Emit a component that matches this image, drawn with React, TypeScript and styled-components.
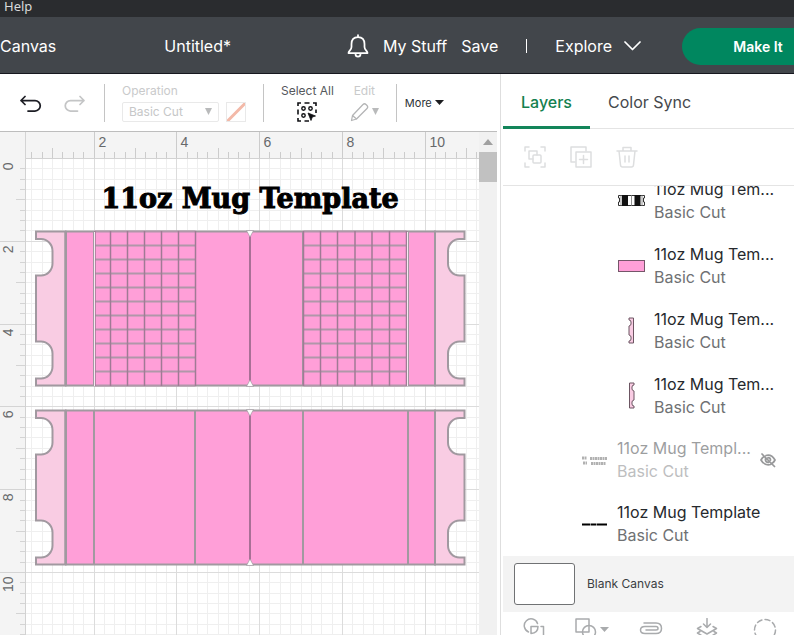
import React, { useEffect, useRef, useState } from "react";
import styled, { createGlobalStyle } from "styled-components";

const GlobalStyle = createGlobalStyle`
  *, *::before, *::after { box-sizing: border-box; }
  html, body { margin: 0; height: 100%; overflow: hidden; background: #fff; }
  #root { height: 100%; }
  button, select, input { font-family: inherit; margin: 0; padding: 0; border: 0; background: none; color: inherit; }
  svg { display: block; flex: none; }
`;

const Page = styled.div`
  display: flex;
  flex-direction: column;
  height: 100vh;
  overflow: hidden;
  font-family: Inter, "Liberation Sans", sans-serif;
  color: #2d3136;
`;

const MenuBar = styled.nav`
  flex: none;
  height: 17px;
  padding-left: 4px;
  background: #2a2c2f;
  color: #d9dadb;
  font-family: "Noto Sans", sans-serif;
`;

const MenuItem = styled.button`
  display: block;
  font-size: 13px;
  line-height: 12px;
`;

const Header = styled.header`
  flex: none;
  display: flex;
  align-items: center;
  height: 57px;
  padding-top: 2px;
  background: #42464b;
  border-bottom: 1px solid #16171f;
  color: #fff;
`;

const Title = styled.h1`
  flex: 1;
  margin: 0;
  padding-right: 8px;
  text-align: center;
  font-size: 16px;
  font-weight: 400;
`;

const HeaderNav = styled.div`
  display: flex;
  align-items: center;
  gap: 14px;
`;

const HeaderButton = styled.button`
  display: flex;
  align-items: center;
  gap: 12px;
  font-size: 16px;
  line-height: 20px;
`;

const Pipe = styled.span`
  width: 1px;
  height: 14px;
  margin: 0 14px;
  background: #fff;
`;

const MakeButton = styled.button`
  width: 112px;
  height: 37px;
  margin-left: 41px;
  padding-left: 40px;
  border-radius: 19px 0 0 19px;
  background: #00875f;
  color: #fff;
  font-size: 14px;
  font-weight: 600;
`;

const Main = styled.main`
  flex: 1;
  min-height: 0;
  display: flex;
`;

const Editor = styled.section`
  flex: 1;
  min-width: 0;
  display: flex;
  flex-direction: column;
  padding-right: 3px;
`;

const Toolbar = styled.div`
  flex: none;
  display: flex;
  align-items: center;
  height: 58px;
  padding-left: 20px;
  border-bottom: 1px solid #bdbdbd;
`;

const IconButton = styled.button`
  display: flex;
  align-items: center;
  gap: 3px;
`;

const History = styled.div`
  display: flex;
  gap: 21px;
  padding-top: 3px;
`;

const Divider = styled.span`
  width: 1px;
  height: 38px;
  margin: 0 17px;
  background: #c4c4c4;
`;

const Tool = styled.div<{ $muted?: boolean; $center?: boolean }>`
  display: flex;
  flex-direction: column;
  align-items: ${(p) => (p.$center ? "center" : "flex-start")};
  gap: 4px;
  font-size: 12px;
  line-height: 14px;
  color: ${(p) => (p.$muted ? "#c9cacb" : "#55585c")};
`;

const SelectionTools = styled.div`
  display: flex;
  gap: 16px;
`;

const OperationRow = styled.div`
  display: flex;
  gap: 7px;
`;

const SelectBox = styled.span`
  display: flex;
  align-items: center;
  width: 97px;
  height: 20px;
  padding: 0 6px;
  border: 1px solid #e9e9e9;
  border-radius: 2px;
`;

const OperationSelect = styled.select`
  flex: 1;
  min-width: 0;
  appearance: none;
  font-size: 12px;
  line-height: 16px;
  color: #c6c7c8;
  opacity: 1;
`;

const Swatch = styled.button`
  width: 20px;
  height: 20px;
  border: 1px solid #e9e9e9;
`;

const MoreButton = styled.button`
  display: flex;
  align-items: center;
  gap: 3px;
  margin-left: -9px;
  font-size: 11px;
  line-height: 16px;
  color: #2d3136;
`;

const Workspace = styled.div`
  flex: 1;
  min-height: 0;
  display: grid;
  grid-template-columns: 26px minmax(0, 1fr) 18px;
  grid-template-rows: 27px minmax(0, 1fr);
`;

const Corner = styled.div`
  background: #f4f4f4;
  border-right: 1px solid #d4d4d4;
`;

const RulerSvg = styled.svg`
  width: 100%;
  height: 100%;
  background: #f4f4f4;
  font-family: "Liberation Sans", sans-serif;
  font-size: 14px;
`;

const BoardSvg = styled.svg`
  width: 100%;
  height: 100%;
  background: #fff;
`;

const ScrollTrack = styled.div`
  grid-column: 3;
  grid-row: 1 / 3;
  display: flex;
  flex-direction: column;
  align-items: center;
  padding-top: 7px;
  gap: 7px;
  background: #f1f1f1;
`;

const ScrollThumb = styled.div`
  align-self: stretch;
  height: 30px;
  background: #c1c1c1;
`;

const Panel = styled.aside`
  flex: none;
  width: 294px;
  display: flex;
  flex-direction: column;
  padding-left: 2px;
  border-left: 1px solid #dedede;
`;

const Tabs = styled.div`
  flex: none;
  display: flex;
  height: 55px;
  border-bottom: 1px solid #e4e4e4;
`;

const Tab = styled.button<{ $active?: boolean }>`
  height: 55px;
  padding: 4px 18px 0;
  border-bottom: 3px solid ${(p) => (p.$active ? "#13855a" : "transparent")};
  font-size: 16px;
  line-height: 20px;
  font-weight: ${(p) => (p.$active ? 500 : 400)};
  color: ${(p) => (p.$active ? "#13804f" : "#45484c")};
`;

const Actions = styled.div`
  flex: none;
  display: flex;
  align-items: center;
  gap: 24px;
  height: 57px;
  padding-left: 21px;
  border-bottom: 1px solid #e4e4e4;
`;

const LayerList = styled.ul`
  flex: 1;
  min-height: 0;
  margin: 0;
  padding: 0;
  list-style: none;
  display: flex;
  flex-direction: column;
  justify-content: flex-end;
  overflow: hidden;
`;

const LayerRow = styled.li<{ $nested?: boolean; $hidden?: boolean }>`
  flex: none;
  display: flex;
  align-items: center;
  gap: 9px;
  height: ${(p) => (p.$nested ? 65 : 64)}px;
  padding-left: ${(p) => (p.$nested ? 115 : 78)}px;
  padding-right: 18px;
  opacity: ${(p) => (p.$hidden ? 0.45 : 1)};
`;

const LayerText = styled.div`
  flex: 1;
  min-width: 0;
  white-space: nowrap;
  font-size: 16px;
  line-height: 23px;
`;

const LayerName = styled.div`
  color: #26292d;
`;

const LayerKind = styled.div`
  color: #6f7173;
`;

const CanvasRow = styled.div`
  flex: none;
  display: flex;
  align-items: center;
  gap: 12px;
  height: 56px;
  padding-left: 11px;
  background: #f3f3f3;
  font-size: 12px;
  line-height: 16px;
  color: #3b3e42;
`;

const CanvasColor = styled.button`
  width: 61px;
  height: 42px;
  border: 1px solid #707274;
  border-radius: 3px;
  background: #fff;
`;

const Footer = styled.div`
  flex: none;
  display: flex;
  align-items: flex-start;
  gap: 30px;
  height: 23px;
  padding: 6px 0 0 20px;
  overflow: hidden;
`;

const Stroke = ({ w, h, color, sw = 2, children }: { w: number; h: number; color: string; sw?: number; children: React.ReactNode }) => (
  <svg width={w} height={h} viewBox={`0 0 ${w} ${h}`} fill="none" stroke={color} strokeWidth={sw} strokeLinecap="round" strokeLinejoin="round" aria-hidden="true">
    {children}
  </svg>
);

const Caret = ({ w = 8, h = 7, color, up }: { w?: number; h?: number; color: string; up?: boolean }) => (
  <svg width={w} height={h} viewBox="0 0 8 6" preserveAspectRatio="none" aria-hidden="true">
    <path d={up ? "M0 6 L4 0 L8 6Z" : "M0 0 H8 L4 6Z"} fill={color} />
  </svg>
);

const INCH = 41.4;
const ORIGIN_X = 11.7 - 26;
const tickX = (i: number) => Math.round(ORIGIN_X + (i * INCH) / 4) - 0.5;
const tickY = (i: number) => Math.round((i * INCH) / 4) - 0.5;
const range = (n: number) => Array.from({ length: n }, (_, i) => i);

function useSize() {
  const ref = useRef<SVGSVGElement>(null);
  const [size, setSize] = useState({ width: 453, height: 476 });
  useEffect(() => {
    const el = ref.current;
    if (!el) return;
    const read = () => {
      const box = el.getBoundingClientRect();
      setSize({ width: box.width, height: box.height });
    };
    read();
    const observer = new ResizeObserver(read);
    observer.observe(el);
    return () => observer.disconnect();
  }, []);
  return { ref, ...size };
}

const TopRuler = () => {
  const { ref, width } = useSize();
  const ticks = range(200).filter((i) => tickX(i) > 0 && tickX(i) < width);
  return (
    <RulerSvg ref={ref} role="img" aria-label="Horizontal ruler">
      {ticks.map((i) => (
        <line key={i} x1={tickX(i)} x2={tickX(i)} y1={i % 8 === 0 ? 0 : i % 4 === 0 ? 16 : 20} y2={27} stroke="#cccccc" />
      ))}
      <line x1="0" x2="100%" y1="26.5" y2="26.5" stroke="#d2d2d2" />
      {ticks.filter((i) => i % 8 === 0 && tickX(i) < width - 20).map((i) => (
        <text key={i} x={tickX(i) + 4} y={15} fill="#67696b">{i / 4}</text>
      ))}
    </RulerSvg>
  );
};

const LeftRuler = () => {
  const { ref, height } = useSize();
  const ticks = range(200).filter((i) => tickY(i) < height);
  return (
    <RulerSvg ref={ref} role="img" aria-label="Vertical ruler">
      {ticks.map((i) => (
        <line key={i} y1={tickY(i)} y2={tickY(i)} x1={i % 8 === 0 ? 0 : i % 4 === 0 ? 16 : 20} x2={26} stroke="#d4d4d4" />
      ))}
      <line x1="25.5" x2="25.5" y1="0" y2="100%" stroke="#d2d2d2" />
      {ticks.filter((i) => i % 8 === 0 && tickY(i) < height - 20).map((i) => (
        <text key={i} transform={`translate(13 ${tickY(i) + 4}) rotate(-90)`} textAnchor="end" fill="#67696b">{i / 4}</text>
      ))}
    </RulerSvg>
  );
};

const EDGE = "#a199a0";
const PINK = "#ff9fd8";
const HANDLE =
  "M36 231.500 H65.500 V385.500 H36 V378.500 H41 A11.500 12 0 0 0 52.500 366.500 V353.500 A11.500 12 0 0 0 41 341.500 H36 V275.500 H41 A11.500 12 0 0 0 52.500 263.500 V251 A11.500 12 0 0 0 41 239 H36 Z";
const leftCols = [95, 110.5, 127.5, 144.5, 161.5, 178.5, 195.5];
const rightCols = [303.5, 320.5, 337.5, 355, 372, 389.5, 406.5];

const Cells = ({ cols }: { cols: number[] }) => {
  const start = cols[0];
  const end = cols[cols.length - 1];
  return (
    <g>
      <rect x={start} y="231" width={end - start} height="155" fill={PINK} />
      {range(12).map((r) => (
        <line key={r} x1={start} x2={end} y1={231.5 + r * 14} y2={231.5 + r * 14} stroke="#b097a9" strokeWidth="2" />
      ))}
      {cols.map((x) => (
        <line key={x} x1={x} x2={x} y1="231" y2="386" stroke="#a07a95" strokeWidth="1.500" />
      ))}
    </g>
  );
};

const Mug = ({ cells }: { cells?: boolean }) => (
  <g>
    <path d={HANDLE} fill="#f9cce3" stroke={EDGE} strokeWidth="2" />
    <path d={HANDLE} transform="translate(500.500 0) scale(-1 1)" fill="#f9cce3" stroke={EDGE} strokeWidth="2" />
    <rect x="66" y="231.500" width="369" height="154" fill={PINK} stroke={EDGE} strokeWidth="2" />
    {[65.5, 94, 195, 303, 408, 435].map((x) => (
      <line key={x} x1={x} x2={x} y1="231" y2="386" stroke={EDGE} strokeWidth="2" />
    ))}
    {cells && <Cells cols={leftCols} />}
    {cells && <Cells cols={rightCols} />}
    {cells && <path d="M94.500 232 V386 M407.500 232 V386" stroke="#f6eaf2" />}
    <line x1="250" x2="250" y1="236" y2="381" stroke="#8d6080" strokeWidth="1.500" />
    <path d="M246.500 230.500 L250 237 L253.500 230.500Z M246.500 386.500 L250 380 L253.500 386.500Z" fill="#fff" stroke="#a199a0" strokeWidth="0.700" />
  </g>
);

const ArtTitle = styled.text`
  font-family: "DejaVu Serif", serif;
  font-size: 27px;
  font-weight: 700;
  fill: #000;
  stroke: #000;
  stroke-width: 1px;
`;

const Board = () => {
  const { ref, width, height } = useSize();
  return (
    <BoardSvg ref={ref} role="img" aria-label="Design canvas">
      {[false, true].map((major) => (
        <g key={String(major)} stroke={major ? "#dcdcdc" : "#efefef"}>
          {range(200).filter((i) => (i % 8 === 0) === major).map((i) => (
            <React.Fragment key={i}>
              {tickX(i) > 0 && tickX(i) < width && <line x1={tickX(i)} x2={tickX(i)} y1="0" y2="100%" />}
              {tickY(i) < height && <line y1={tickY(i)} y2={tickY(i)} x1="0" x2="100%" />}
            </React.Fragment>
          ))}
        </g>
      ))}
      <g transform="translate(-26 -159)">
        <ArtTitle x="250" y="208" textAnchor="middle">11oz Mug Template</ArtTitle>
        <Mug cells />
        <g transform="translate(0 179)">
          <Mug />
        </g>
      </g>
    </BoardSvg>
  );
};

const MINI_HANDLE = "M1 1 H5.500 V26 H1 V24 Q3 24 3 22 V20 Q3 18.500 1 18 V9 Q3 8.500 3 7 V5 Q3 3 1 3 Z";

const Thumb = ({ kind }: { kind: string }) => (
  <svg width="27" height="27" viewBox="0 0 27 27" aria-hidden="true">
    {kind === "lines" && (
      <g>
        <path d="M0.500 8.500 H26.500 V11 H25.500 V15 H26.500 V18.500 H0.500 V15 H1.500 V11 H0.500Z" fill="#fff" stroke="#333" />
        <path d="M4 8 h6 v11 h-6z M16.500 8 h6 v11 h-6z" fill="#111" />
        <path d="M13.500 8 V19 M3 8 V19 M24 8 V19" stroke="#777" strokeWidth="0.800" />
      </g>
    )}
    {kind === "body" && <rect x="0.500" y="8.500" width="26" height="11" fill={PINK} stroke="#75566a" />}
    {kind === "left" && <path transform="translate(10 0)" d={MINI_HANDLE} fill="#f9cce3" stroke="#6c5562" />}
    {kind === "right" && <path transform="translate(17 0) scale(-1 1)" d={MINI_HANDLE} fill="#f9cce3" stroke="#6c5562" />}
    {kind === "size" && (
      <path d="M1 11 H6 M9 11.500 H26 M2 16 H6 M10 16.500 H25" stroke="#555" strokeWidth="3" strokeDasharray="2 0.500" />
    )}
    {kind === "title" && <path d="M1 13.500 H9 M9.500 13.500 H15 M15.500 13.500 H26" stroke="#000" strokeWidth="2" />}
  </svg>
);

const layers = [
  { name: "11oz Mug Tem...", thumb: "lines", nested: true },
  { name: "11oz Mug Tem...", thumb: "body", nested: true },
  { name: "11oz Mug Tem...", thumb: "left", nested: true },
  { name: "11oz Mug Tem...", thumb: "right", nested: true },
  { name: "11oz Mug Templ...", thumb: "size", hidden: true },
  { name: "11oz Mug Template", thumb: "title" },
];

const LIGHT = "#dddedf";
const MID = "#a9abad";

export default function App() {
  return (
    <Page>
      <GlobalStyle />
      <MenuBar>
        <MenuItem>Help</MenuItem>
      </MenuBar>
      <Header>
        <HeaderButton>Canvas</HeaderButton>
        <Title>Untitled*</Title>
        <HeaderNav>
          <HeaderButton aria-label="Notifications">
            <Stroke w={22} h={24} color="#fff" sw={1.75}>
              <path d="M11 1 V3 M1.500 19 H20.500 C20.500 17 17.500 16 17.500 13 V10 C17.500 5.500 15 3 11 3 C7 3 4.500 5.500 4.500 10 V13 C4.500 16 1.500 17 1.500 19Z" />
              <path d="M8.500 20 C8.500 23.500 13.500 23.500 13.500 20" />
            </Stroke>
          </HeaderButton>
          <HeaderButton>My Stuff</HeaderButton>
          <HeaderButton>Save</HeaderButton>
          <Pipe />
          <HeaderButton>
            Explore
            <Stroke w={17} h={10} color="#fff" sw={1.75}>
              <path d="M1 1 L8.500 8.500 L16 1" />
            </Stroke>
          </HeaderButton>
        </HeaderNav>
        <MakeButton>Make It</MakeButton>
      </Header>
      <Main>
        <Editor>
          <Toolbar>
            <History>
              <IconButton aria-label="Undo">
                <Stroke w={23} h={18} color="#1c1d24" sw={1.75}>
                  <path d="M5 1.500 L1 5.500 L5 9.500 M1 5.500 H15 A5.250 5.250 0 0 1 15 16 H8" />
                </Stroke>
              </IconButton>
              <IconButton aria-label="Redo" disabled>
                <Stroke w={23} h={18} color="#c4c5c6" sw={1.75}>
                  <path d="M16 1.500 L20 5.500 L16 9.500 M20 5.500 H6.500 A5.250 5.250 0 0 0 6.500 16 H13.500" />
                </Stroke>
              </IconButton>
            </History>
            <Divider />
            <Tool $muted>
              <label htmlFor="operation">Operation</label>
              <OperationRow>
                <SelectBox>
                  <OperationSelect id="operation" disabled>
                    <option>Basic Cut</option>
                  </OperationSelect>
                  <Caret color="#b9babb" w={7} />
                </SelectBox>
                <Swatch aria-label="Operation color" disabled>
                  <svg width="18" height="18" viewBox="0 0 18 18" aria-hidden="true">
                    <path d="M1 17.500 L17.500 1" stroke="#f3b9a8" strokeWidth="3" strokeLinecap="round" />
                  </svg>
                </Swatch>
              </OperationRow>
            </Tool>
            <Divider />
            <SelectionTools>
              <Tool $center>
                <label htmlFor="select-all">Select All</label>
                <IconButton id="select-all">
                  <svg width="20" height="20" viewBox="0 0 20 20" fill="none" stroke="#101114" strokeWidth="1.600" aria-hidden="true">
                    <path d="M1 4 V1 H4 M7.500 1 H12.500 M16 1 H19 V4 M19 7.500 V11 M1 7.500 V12.500 M1 16 V19 H4 M7.500 19 H12" />
                    <circle cx="6.500" cy="6.500" r="1.700" strokeWidth="1.400" />
                    <circle cx="13.500" cy="6.500" r="1.700" strokeWidth="1.400" />
                    <circle cx="6.500" cy="13.500" r="1.700" strokeWidth="1.400" />
                    <path d="M11 11 L18.500 14 L15.300 15 L14 18.500Z" fill="#101114" strokeWidth="0.800" />
                  </svg>
                </IconButton>
              </Tool>
              <Tool $muted $center>
                <label htmlFor="edit">Edit</label>
                <IconButton id="edit" disabled>
                  <Stroke w={19} h={20} color="#b4b5b6" sw={1.25}>
                    <path d="M1.500 18.500 L2.500 13.500 L13 2.500 Q14.500 1 16 2.500 L17 3.500 Q18.500 5 17 6.500 L6.500 17 Z M2.500 13.500 L6.500 17" />
                  </Stroke>
                  <Caret color="#b9babb" w={7} />
                </IconButton>
              </Tool>
            </SelectionTools>
            <Divider />
            <MoreButton>
              More <Caret color="#1c1d20" w={9} h={5} />
            </MoreButton>
          </Toolbar>
          <Workspace>
            <Corner />
            <TopRuler />
            <ScrollTrack>
              <Caret up color="#a0a0a0" w={10} h={6} />
              <ScrollThumb />
            </ScrollTrack>
            <LeftRuler />
            <Board />
          </Workspace>
        </Editor>
        <Panel>
          <Tabs role="tablist">
            <Tab $active role="tab" aria-selected="true">Layers</Tab>
            <Tab role="tab" aria-selected="false">Color Sync</Tab>
          </Tabs>
          <Actions>
            <IconButton aria-label="Group" disabled>
              <Stroke w={22} h={22} color={LIGHT} sw={1.5}>
                <path d="M1 5 V1 H5 M17 1 H21 V5 M21 17 V21 H17 M5 21 H1 V17" />
                <path d="M9 13 H5 V5 H13 V9" />
                <rect x="9" y="9" width="8" height="8" rx="1" />
              </Stroke>
            </IconButton>
            <IconButton aria-label="Duplicate" disabled>
              <Stroke w={22} h={22} color={LIGHT} sw={1.5}>
                <path d="M5 16 H1 V1 H16 V5" />
                <rect x="6" y="6" width="15" height="15" />
                <path d="M13.500 9.500 V17.500 M9.500 13.500 H17.500" />
              </Stroke>
            </IconButton>
            <IconButton aria-label="Delete" disabled>
              <Stroke w={22} h={22} color={LIGHT} sw={1.5}>
                <path d="M1 5 H21 M7 5 V1.500 H15 V5 M3 5 L4.500 19 Q4.700 21 6.500 21 H15.500 Q17.300 21 17.500 19 L19 5 M9 10 V16 M13 10 V16" />
              </Stroke>
            </IconButton>
          </Actions>
          <LayerList>
            {layers.map((l, i) => (
              <LayerRow key={i} $nested={l.nested} $hidden={l.hidden}>
                <Thumb kind={l.thumb} />
                <LayerText>
                  <LayerName>{l.name}</LayerName>
                  <LayerKind>Basic Cut</LayerKind>
                </LayerText>
                {l.hidden && (
                  <IconButton aria-label="Show layer">
                    <Stroke w={16} h={16} color="#1c1e22" sw={1.75}>
                      <path d="M2 2 L14.500 14.500 M6 3.500 Q11.500 2 15 8 Q14 10 12.500 11 M10.500 12.500 Q4.500 14 1 8 Q2 6 3.800 4.800 M5.500 6.500 Q5 10 8.500 10.500 M8 5.500 Q10.500 5.500 10.500 8" />
                    </Stroke>
                  </IconButton>
                )}
              </LayerRow>
            ))}
          </LayerList>
          <CanvasRow>
            <CanvasColor aria-label="Canvas color" />
            Blank Canvas
          </CanvasRow>
          <Footer>
            <IconButton aria-label="Slice">
              <Stroke w={22} h={22} color={MID} sw={1.5}>
                <path d="M5.500 14 A6.800 6.800 0 1 1 14.500 5.500 M8 8.500 H15 Q15 15 8 15.500 Z M18 8.500 H20.500 V21 H9" />
              </Stroke>
            </IconButton>
            <IconButton aria-label="Combine">
              <Stroke w={22} h={22} color={MID} sw={1.5}>
                <rect x="1" y="1" width="13" height="13" />
                <circle cx="14" cy="14" r="6.500" />
              </Stroke>
              <Caret color={MID} w={9} h={5} />
            </IconButton>
            <IconButton aria-label="Attach">
              <Stroke w={24} h={22} color={MID} sw={1.5}>
                <path d="M7 12 H17 Q19 12 19 10.500 Q19 8.500 17 8.500 H6 Q1.500 8.500 1.500 12 Q1.500 15.500 6 15.500 H17 Q22.500 15.500 22.500 10.500 Q22.500 5 17 5 H5" />
              </Stroke>
            </IconButton>
            <IconButton aria-label="Flatten">
              <Stroke w={28} h={22} color={MID} sw={1.5}>
                <path d="M14 0.500 V9 M10.500 6 L14 9.500 L17.500 6 M8 8.500 L4.500 10.500 L14 16 L23.500 10.500 L20 8.500 M7 13.500 L4.500 15 L14 21 L23.500 15 L21 13.500" />
              </Stroke>
            </IconButton>
            <IconButton aria-label="Contour">
              <Stroke w={28} h={24} color={MID} sw={1.5}>
                <circle cx="14" cy="12" r="10.500" strokeDasharray="5 3.200" />
              </Stroke>
            </IconButton>
          </Footer>
        </Panel>
      </Main>
    </Page>
  );
}
